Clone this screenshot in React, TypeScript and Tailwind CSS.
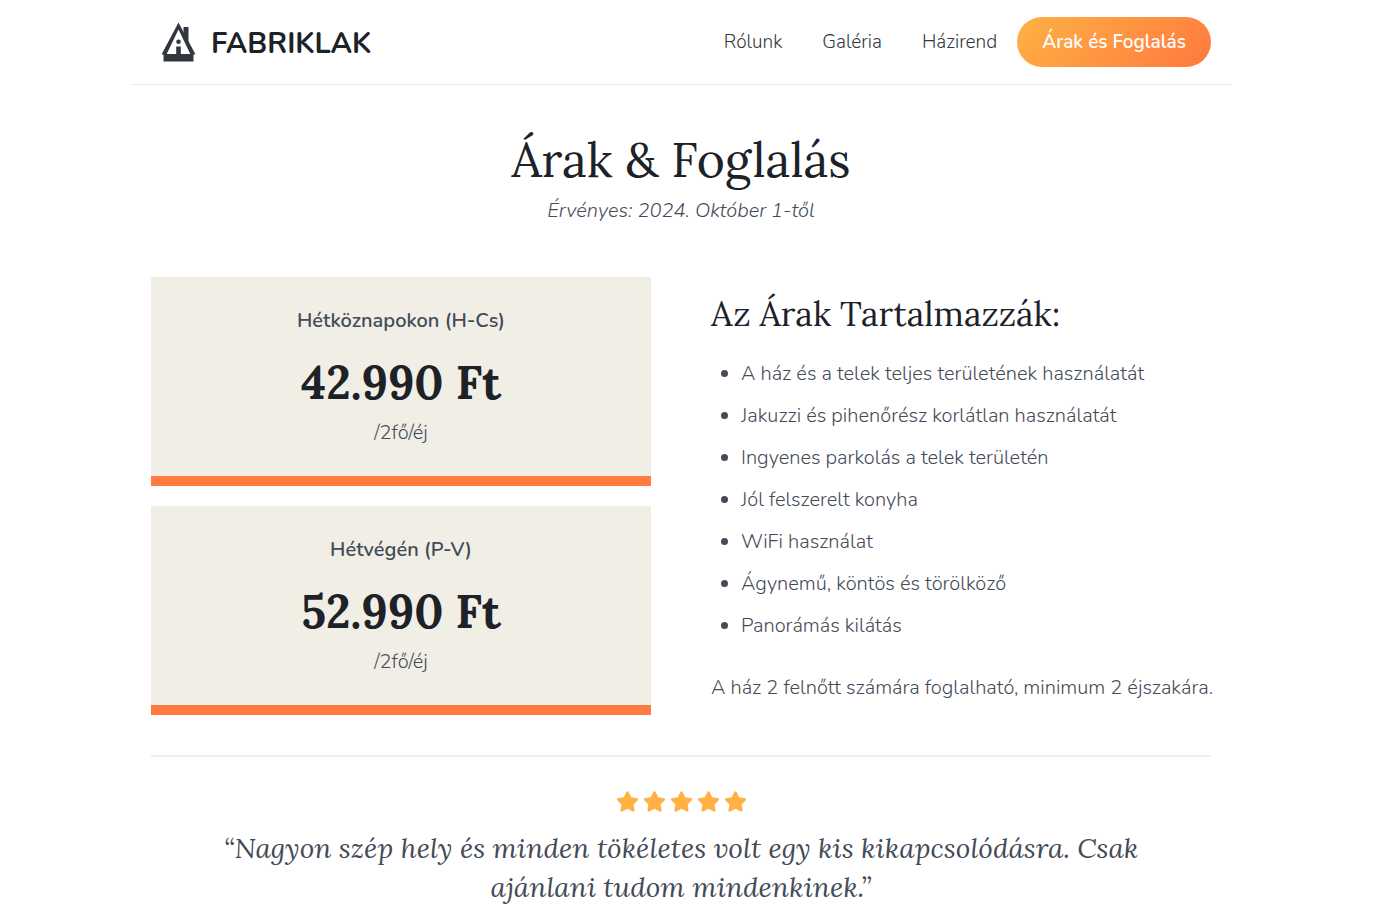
import React from "react";
import { FaStar } from "react-icons/fa";

const navLinks = [
  { label: "Rólunk", href: "#rolunk" },
  { label: "Galéria", href: "#galeria" },
  { label: "Házirend", href: "#hazirend" },
];

const prices = [
  { title: "Hétköznapokon (H-Cs)", amount: "42.990 Ft", unit: "/2fő/éj" },
  { title: "Hétvégén (P-V)", amount: "52.990 Ft", unit: "/2fő/éj" },
];

const included = [
  "A ház és a telek teljes területének használatát",
  "Jakuzzi és pihenőrész korlátlan használatát",
  "Ingyenes parkolás a telek területén",
  "Jól felszerelt konyha",
  "WiFi használat",
  "Ágynemű, köntös és törölköző",
  "Panorámás kilátás",
];

const serif = "font-['Lora','Liberation_Serif',serif] font-normal";
const serifBold = "font-['Lora','Liberation_Serif',serif] font-bold";

function Logo() {
  return (
    <svg viewBox="0 0 36 40" className="h-10 w-9" fill="#32363f" aria-hidden="true">
      <path d="M23.500 5h5v16l-5-9z" />
      <path
        fillRule="evenodd"
        d="M18.500 0.500 35.500 32.500H33.500v7H3.500v-7H1.500zM18.500 7.500 6.700 32h23.600z"
      />
      <circle cx="18.500" cy="19.700" r="2.300" />
      <path d="M16.200 24.500h4.600v8h-4.600z" />
    </svg>
  );
}

function Header() {
  return (
    <header className="flex h-[85px] items-center justify-between border-b border-[#ebebeb] px-5">
      <a href="#top" className="flex items-center gap-[15px] pl-[9px] text-[29px] leading-10 font-bold text-[#1c2228]">
        <Logo />
        <span className="pt-1">FABRIKLAK</span>
      </a>
      <nav className="flex items-center text-[19px] text-[#32373e]">
        {navLinks.map((link) => (
          <a key={link.label} href={link.href} className="px-5">
            {link.label}
          </a>
        ))}
        <a
          href="#foglalas"
          className="flex h-[50px] items-center rounded-full bg-linear-135 from-[#ffb144] to-[#ff773e] px-[25px] font-semibold text-white"
        >
          Árak és Foglalás
        </a>
      </nav>
    </header>
  );
}

export default function App() {
  return (
    <div className="bg-white pr-[38px] font-['Nunito','Lato',sans-serif] font-light text-[#434b57]">
      <div className="mx-auto max-w-[1100px]">
        <Header />
        <main className="px-5">
          <div className="pt-[42px] text-center">
            <h1 className={`${serif} text-[48px] leading-[66px] text-[#1c2228]`}>Árak &amp; Foglalás</h1>
            <p className="mt-[3px] text-xl leading-[30px] italic">Érvényes: 2024. Október 1-től</p>
          </div>

          <div className="mt-[51px] grid grid-cols-2 gap-[60px]">
            <div className="flex flex-col gap-5 self-start">
              {prices.map((p) => (
                <section
                  key={p.title}
                  className="border-b-[10px] border-[#ff7b42] bg-[#f1eee6] pt-[29px] pb-[28px] text-center text-xl leading-[30px]"
                >
                  <h2 className="font-semibold">{p.title}</h2>
                  <p className={`${serifBold} mt-4 text-[46px] leading-[62px] text-[#1c2228]`}>{p.amount}</p>
                  <p className="mt-1">{p.unit}</p>
                </section>
              ))}
            </div>
            <section className="pt-3 text-xl leading-[30px]">
              <h2 className={`${serif} text-[34px] leading-[50px] text-[#1c2228]`}>Az Árak Tartalmazzák:</h2>
              <ul className="mt-5 flex list-disc flex-col gap-3 pl-[30px]">
                {included.map((item) => (
                  <li key={item}>{item}</li>
                ))}
              </ul>
              <p className="mt-8 lg:whitespace-nowrap">A ház 2 felnőtt számára foglalható, minimum 2 éjszakára.</p>
            </section>
          </div>

          <hr className="mt-10 border-t-2 border-[#eeeeea]" />

          <section className="pt-[33px] text-center">
            <div className="flex justify-center gap-1 text-[#ffb144]" role="img" aria-label="5/5">
              {[1, 2, 3, 4, 5].map((n) => (
                <FaStar key={n} size={23} />
              ))}
            </div>
            <blockquote className={`${serif} mx-auto mt-4 max-w-[940px] text-[28px] leading-[39px] italic`}>
              “Nagyon szép hely és minden tökéletes volt egy kis kikapcsolódásra. Csak ajánlani tudom mindenkinek.”
            </blockquote>
          </section>
        </main>
      </div>
    </div>
  );
}
